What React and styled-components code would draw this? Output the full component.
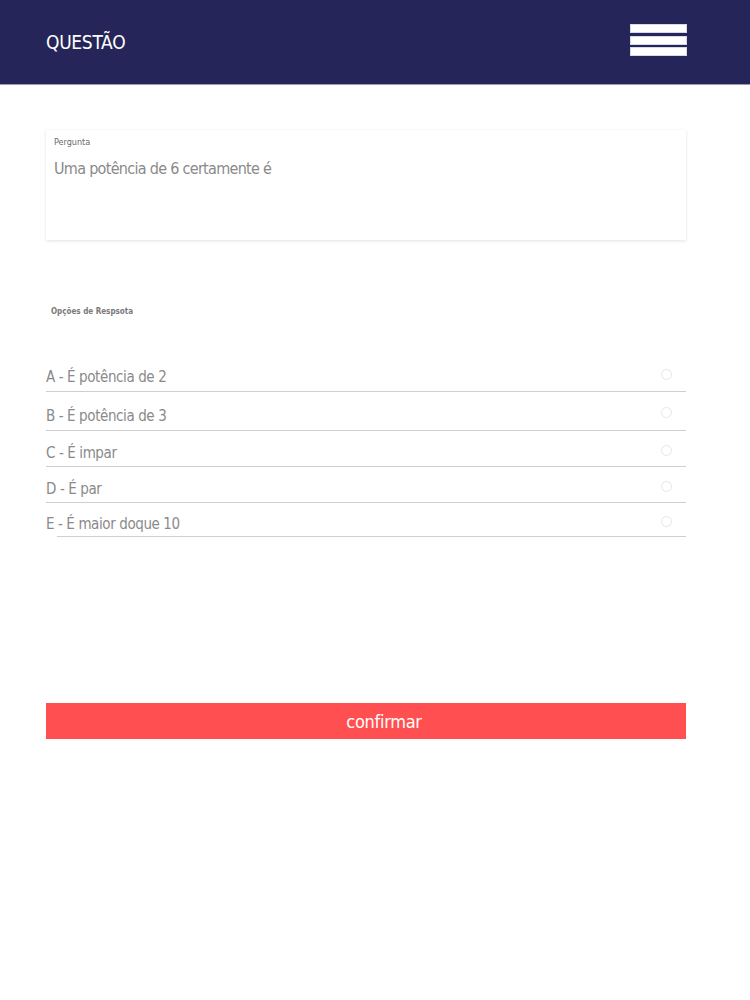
import React, { useState } from "react";
import styled, { createGlobalStyle } from "styled-components";

const GlobalStyle = createGlobalStyle`
  body {
    margin: 0;
    background: #ffffff;
    font-family: "DejaVu Sans Condensed", "Liberation Sans", sans-serif;
  }
`;

const Page = styled.div`
  display: flex;
  flex-direction: column;
  min-height: 1000px;
`;

const Header = styled.div`
  background-color: #26255a;
  height: 84px;
  display: flex;
  flex-direction: row;
  align-items: center;
  justify-content: space-between;
  padding: 0 63px 0 46px;
  border-bottom: 1px solid #9a9ab4;
`;

const Title = styled.div`
  color: #ffffff;
  font-size: 19px;
  letter-spacing: -0.3px;
  margin-top: -1px;
`;

const MenuButton = styled.div`
  display: flex;
  flex-direction: column;
  gap: 2.5px;
  margin-top: -4px;
`;

const MenuBar = styled.div`
  width: 55px;
  height: 7px;
  background: #ffffff;
  border: 1px solid #d8d8e8;
`;

const Content = styled.div`
  display: flex;
  flex-direction: column;
  padding: 45px 64px 0 46px;
`;

const QuestionCard = styled.div`
  height: 110px;
  box-sizing: border-box;
  padding: 7px 8px;
  background: #ffffff;
  box-shadow: 0 1px 3px rgba(0, 0, 0, 0.12);
  display: flex;
  flex-direction: column;
`;

const SmallLabel = styled.div`
  font-size: 9px;
  color: #6b6b6b;
  font-weight: ${(p) => (p.bold ? "bold" : "normal")};
`;

const QuestionText = styled.div`
  font-size: 16px;
  letter-spacing: -0.7px;
  color: #8a8a8a;
  margin-top: 12px;
`;

const OptionsLabel = styled(SmallLabel)`
  margin: 67px 0 0 5px;
  font-size: 8px;
  color: #7a7a7a;
`;

const OptionList = styled.div`
  display: flex;
  flex-direction: column;
  margin-top: 38px;
`;

const OptionRow = styled.label`
  display: flex;
  flex-direction: row;
  align-items: center;
  justify-content: space-between;
  height: ${(p) => p.h}px;
  box-sizing: border-box;
  padding-top: 9px;
  border-bottom: 1px solid #cfcfcf;
  margin-left: ${(p) => (p.indent ? "11px" : "0")};
  cursor: pointer;
`;

const OptionText = styled.span`
  font-size: 15px;
  letter-spacing: -0.4px;
  color: #8a8a8a;
  margin-left: ${(p) => (p.indent ? "-11px" : "0")};
`;

const Radio = styled.span`
  width: 9px;
  height: 9px;
  border-radius: 50%;
  border: 1px solid ${(p) => (p.checked ? "#ff4f4f" : "#e6e6e6")};
  margin: -6px 14px 0 0;
`;

const ConfirmButton = styled.button`
  margin-top: 166px;
  height: 36px;
  border: none;
  padding: 0 0 0 36px;
  background: #ff4f50;
  color: #ffffff;
  font-family: inherit;
  font-size: 18px;
  letter-spacing: -0.3px;
  cursor: pointer;
`;

const options = [
  { text: "A - É potência de 2", h: 38 },
  { text: "B - É potência de 3", h: 39 },
  { text: "C - É impar", h: 36 },
  { text: "D - É par", h: 36 },
  { text: "E - É maior doque 10", h: 34 },
];

function App() {
  const [selected, setSelected] = useState(null);

  return (
    <Page>
      <GlobalStyle />
      <Header>
        <Title>QUESTÃO</Title>
        <MenuButton>
          <MenuBar />
          <MenuBar />
          <MenuBar />
        </MenuButton>
      </Header>
      <Content>
        <QuestionCard>
          <SmallLabel>Pergunta</SmallLabel>
          <QuestionText>Uma potência de 6 certamente é</QuestionText>
        </QuestionCard>
        <OptionsLabel bold>Opções de Respsota</OptionsLabel>
        <OptionList>
          {options.map((opt, i) => {
            const last = i === options.length - 1;
            return (
              <OptionRow
                key={i}
                h={opt.h}
                indent={last}
                onClick={() => setSelected(i)}
              >
                <OptionText indent={last}>{opt.text}</OptionText>
                <Radio checked={selected === i} />
              </OptionRow>
            );
          })}
        </OptionList>
        <ConfirmButton>confirmar</ConfirmButton>
      </Content>
    </Page>
  );
}

export default App;
